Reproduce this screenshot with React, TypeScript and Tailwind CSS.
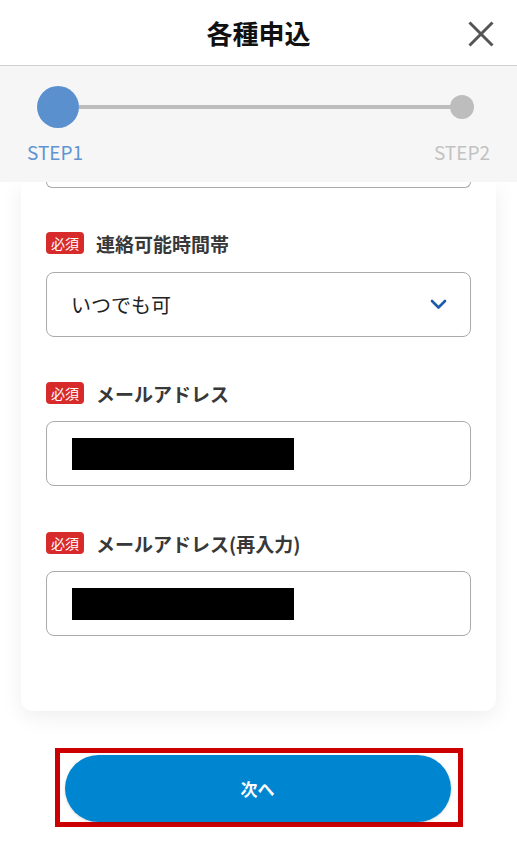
const FONT = "font-['Noto_Sans_CJK_JP','Noto_Sans',sans-serif]";

function RequiredBadge() {
  return (
    <span className="flex h-[22px] w-[38px] shrink-0 items-center justify-center rounded-[4px] bg-[#d72b2b] text-[14px] leading-none text-white">
      必須
    </span>
  );
}

function FieldLabel({ text }: { text: string }) {
  return (
    <div className="flex h-[22px] items-center gap-[12px]">
      <RequiredBadge />
      <span className="text-[19px] font-bold leading-none text-[#383838]">{text}</span>
    </div>
  );
}

// masked value inside the text inputs
function MaskedInput() {
  return (
    <div className="flex h-[65px] items-center rounded-[8px] border border-[#aaa] bg-white pl-[25px]">
      <div className="h-[32px] w-[222px] bg-black" />
    </div>
  );
}

export default function App() {
  return (
    <div className={`${FONT} min-h-[868px] w-full bg-white`}>
      {/* Header */}
      <header className="relative flex h-[66px] items-center justify-center border-b border-[#cfcfcf] bg-white">
        <h1 className="text-[26px] font-bold text-[#111]">各種申込</h1>
        <button className="absolute right-[23px] top-[21px] text-[#555]" aria-label="閉じる">
          <svg width="26" height="26" viewBox="0 0 26 26" fill="none" stroke="currentColor" strokeWidth="3">
            <line x1="1.5" y1="1.5" x2="24.5" y2="24.5" />
            <line x1="24.5" y1="1.5" x2="1.5" y2="24.5" />
          </svg>
        </button>
      </header>

      {/* Step indicator */}
      <div className="relative z-10 h-[116px] bg-[#f6f6f6] pt-[20px]">
        <div className="flex items-center pl-[37px] pr-[43px]">
          <div className="h-[42px] w-[42px] shrink-0 rounded-full bg-[#5b90cf]" />
          <div className="h-[4px] flex-1 bg-[#bdbdbd]" />
          <div className="h-[24px] w-[24px] shrink-0 rounded-full bg-[#bdbdbd]" />
        </div>
        <div className="mt-[12px] flex justify-between px-[27px] text-[19px] leading-[24px]">
          <span className="text-[#5f94d2]">STEP1</span>
          <span className="text-[#c2c2c2]">STEP2</span>
        </div>
      </div>

      {/* Form card */}
      <div className="mx-[21px] rounded-b-[12px] bg-white px-[25px] pb-[75px] shadow-[0_6px_22px_rgba(0,0,0,0.07)]">
        {/* tail of the previous field */}
        <div className="h-[6px] rounded-b-[8px] border-x border-b border-[#aaa]" />

        <div className="mt-[44px]">
          <FieldLabel text="連絡可能時間帯" />
          <div className="mt-[18px] flex h-[65px] items-center justify-between rounded-[8px] border border-[#aaa] bg-white pl-[24px] pr-[23px]">
            <span className="text-[20px] text-[#222]">いつでも可</span>
            <svg width="17" height="11" viewBox="0 0 17 11" fill="none" stroke="#1b5ba8" strokeWidth="2.6" strokeLinecap="round" strokeLinejoin="round">
              <polyline points="2 2 8.5 8.5 15 2" />
            </svg>
          </div>
        </div>

        <div className="mt-[45px]">
          <FieldLabel text="メールアドレス" />
          <div className="mt-[17px]">
            <MaskedInput />
          </div>
        </div>

        <div className="mt-[46px]">
          <FieldLabel text="メールアドレス(再入力)" />
          <div className="mt-[17px]">
            <MaskedInput />
          </div>
        </div>
      </div>

      {/* Next button */}
      <div className="mx-auto mt-[37px] w-[408px] border-[5px] border-[#cc0000] pb-0 pl-[5px] pr-[7px] pt-[2px]">
        <button className="flex h-[67px] w-full items-center justify-center rounded-full bg-[#0086d1] text-[17px] font-bold text-white shadow-[0_1px_3px_rgba(0,0,0,0.15)]">
          次へ
        </button>
      </div>
    </div>
  );
}
